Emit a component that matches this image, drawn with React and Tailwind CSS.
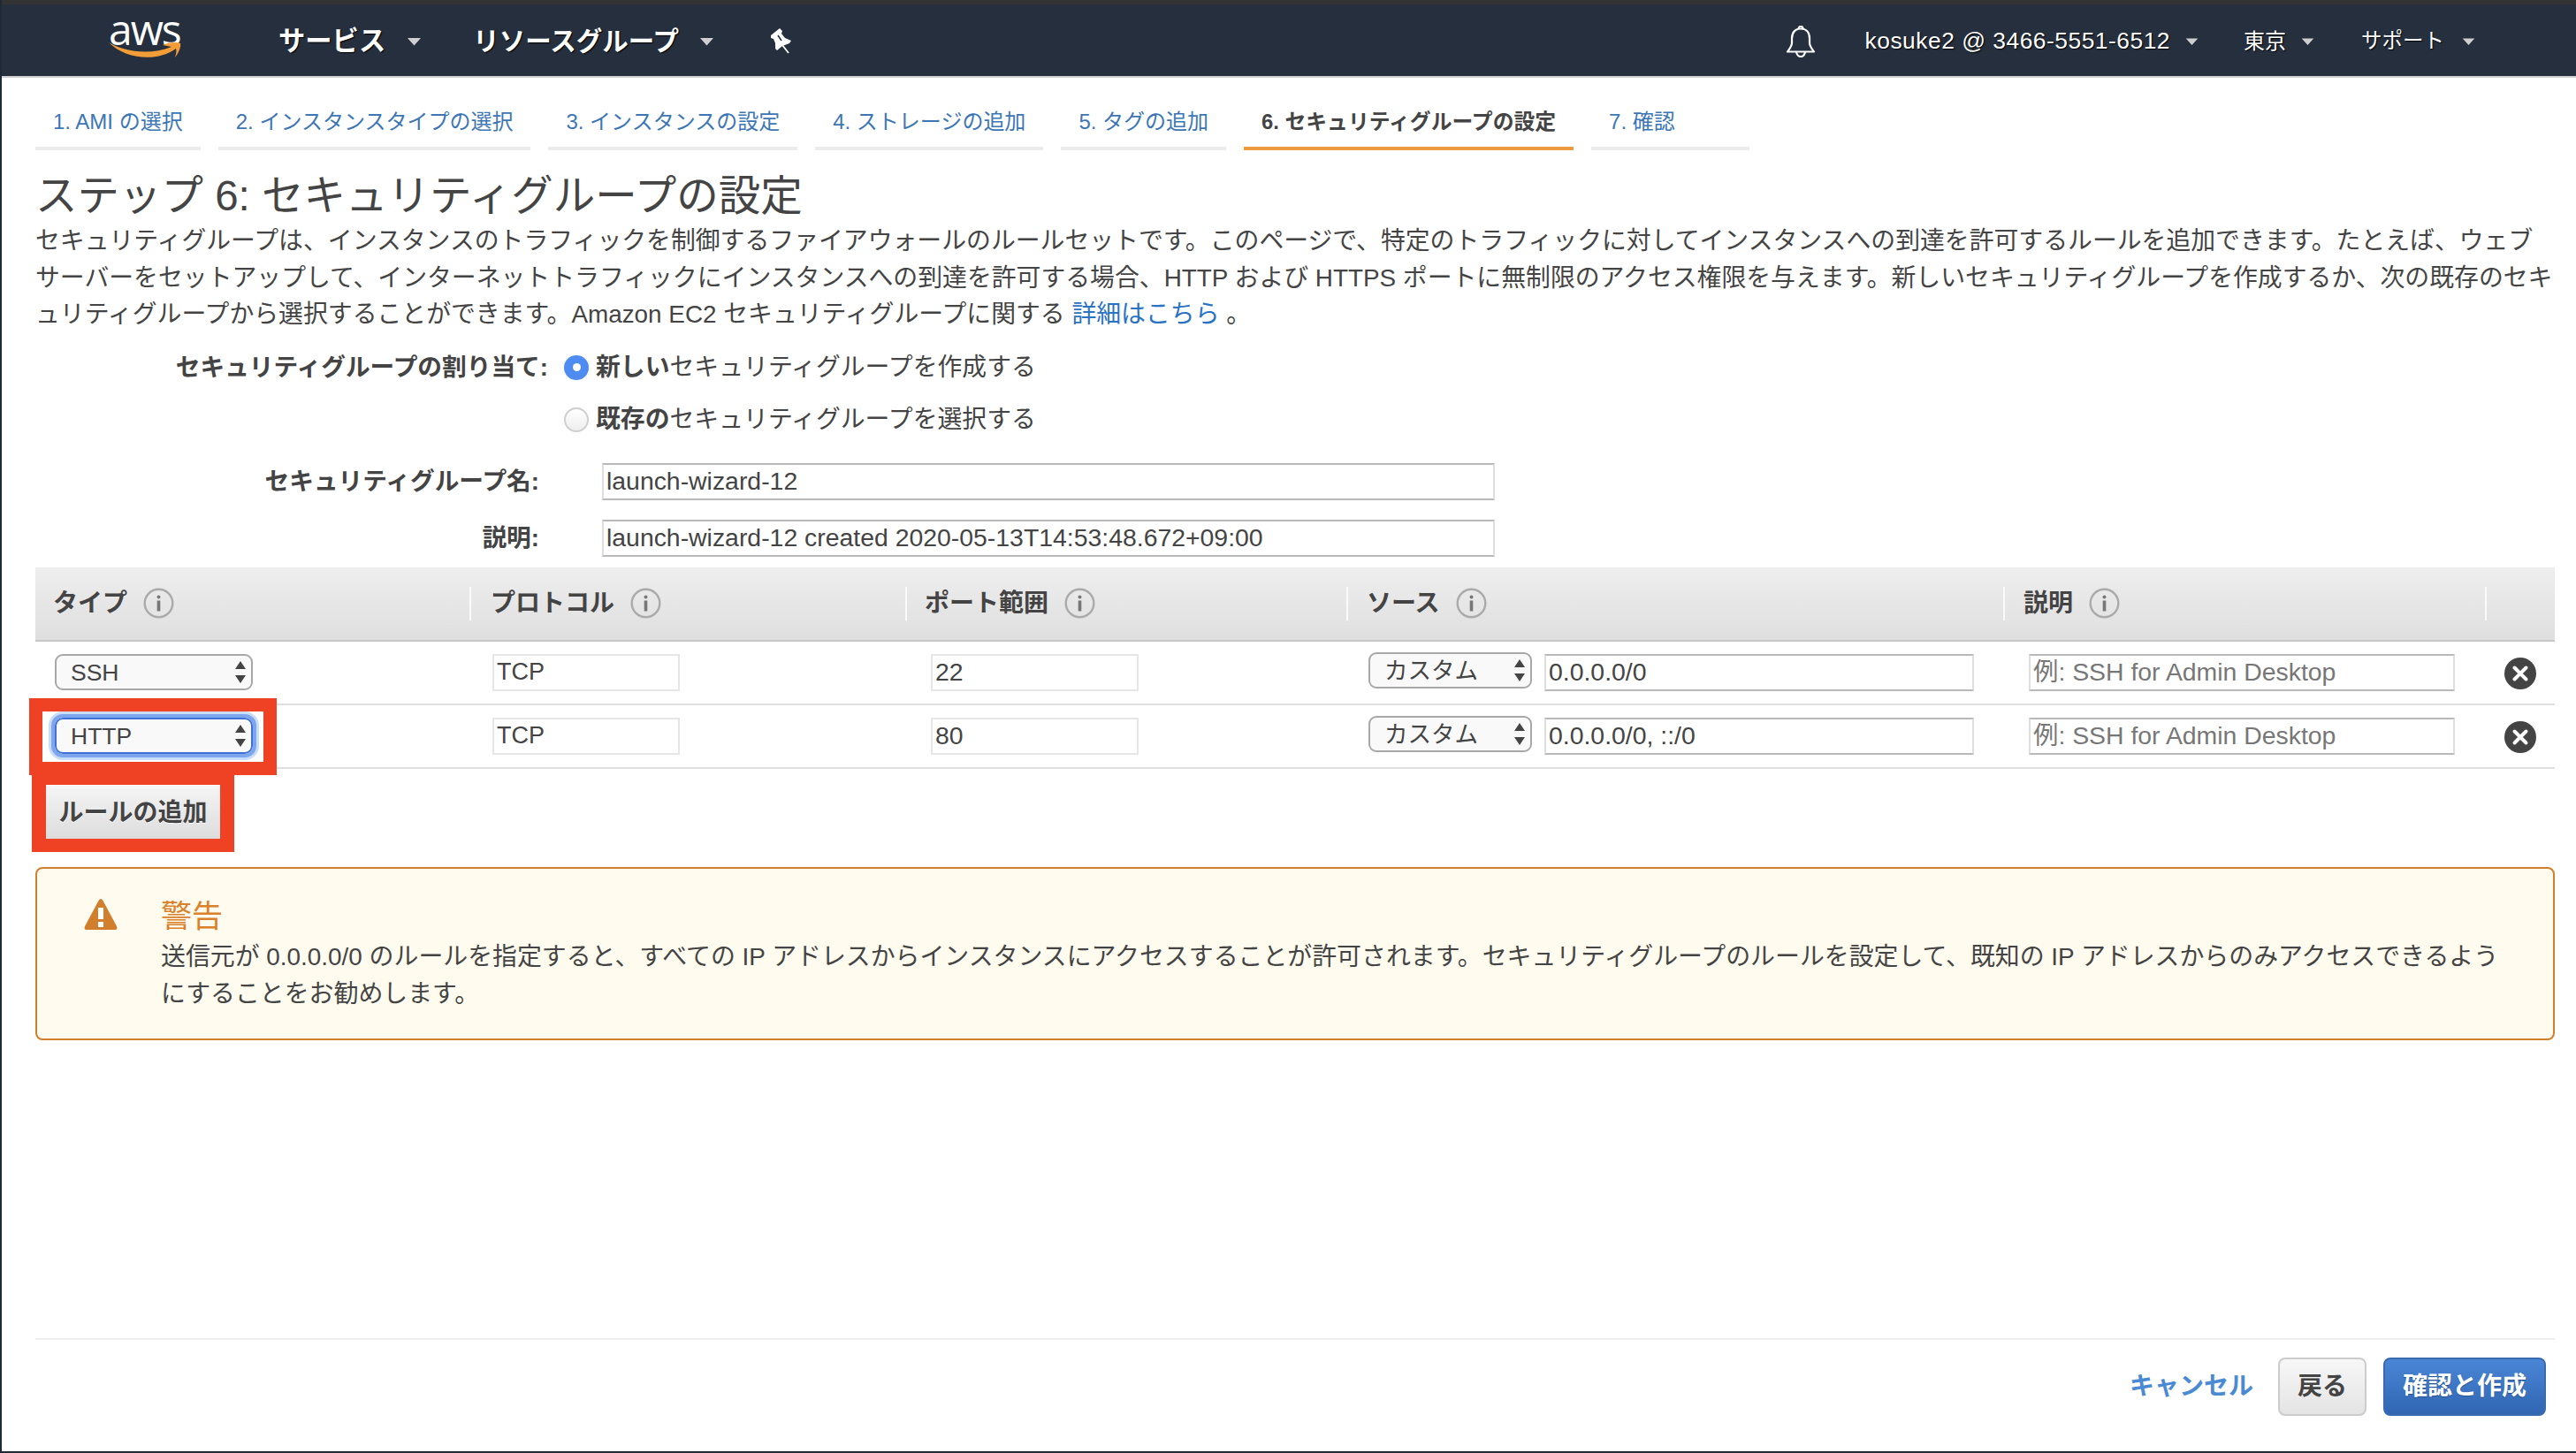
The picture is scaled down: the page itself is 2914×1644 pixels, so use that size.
import React from "react";

const Caret = ({ className = "" }) => (
  <svg width="17" height="10" viewBox="0 0 17 10" className={className}>
    <path d="M1 1h15L8.5 9.5z" fill="#cfcfcf" />
  </svg>
);

const Info = () => (
  <svg width="35" height="35" viewBox="0 0 35 35" className="shrink-0">
    <circle cx="17.5" cy="17.5" r="15.8" fill="none" stroke="#aaaaaa" strokeWidth="2.4" />
    <circle cx="17.5" cy="10.5" r="2" fill="#777" />
    <rect x="15.7" y="14.5" width="3.6" height="12" fill="#777" />
  </svg>
);

const Remove = () => (
  <svg width="36" height="36" viewBox="0 0 36 36">
    <circle cx="18" cy="18" r="18" fill="#444" />
    <path d="M11.5 11.5l13 13M24.5 11.5l-13 13" stroke="#fff" strokeWidth="4" strokeLinecap="round" />
  </svg>
);

const Arrows = ({ className = "" }) => (
  <svg width="14" height="25" viewBox="0 0 14 25" className={className}>
    <path d="M7 0l6 9H1z" fill="#444" />
    <path d="M7 25l6-9H1z" fill="#444" />
  </svg>
);

const Select = ({ value, focus, widthClass, arrowClass }) => (
  <div
    className={`relative h-[41px] ${widthClass} ${
      focus
        ? "rounded-[9px] outline-[4px] outline-[#7ea6ee] [box-shadow:0_0_0_7px_#c9dcfa]"
        : ""
    }`}
  >
    <select
      defaultValue={value}
      className={`block h-full w-full appearance-none rounded-[9px] bg-[#f9f9f9] pl-[16px] text-[26.5px] leading-[38px] text-[#444] outline-none border-2 ${
        focus ? "border-[#3f72d6]" : "border-[#a8a8a8]"
      }`}
    >
      <option>{value}</option>
    </select>
    <Arrows className={`absolute top-[8px] pointer-events-none ${arrowClass}`} />
  </div>
);

const Field = ({ value, placeholder, widthClass, light, textClass = "text-[28.4px]" }) => (
  <input
    readOnly
    value={value ?? ""}
    placeholder={placeholder}
    className={`block h-[42px] ${widthClass} bg-white pl-[3px] ${textClass} text-[#444] placeholder:text-[#777] outline-none border-2 ${
      light
        ? "border-[#e6e6e6]"
        : "border-[#dedede] border-t-[#b9b9b9] border-b-[#b9b9b9]"
    }`}
  />
);

const tabs = [
  ["1. AMI の選択", "pr-[20px]"],
  ["2. インスタンスタイプの選択", "pr-[20px]"],
  ["3. インスタンスの設定", "pr-[20px]"],
  ["4. ストレージの追加", "pr-[20px]"],
  ["5. タグの追加", "pr-[20px]"],
  ["6. セキュリティグループの設定", "pr-[20px] text-[23.8px]", true],
  ["7. 確認", "pr-[84px]"],
];

const heads = [
  ["タイプ", "w-[491px] pl-[20px]"],
  ["プロトコル", "w-[493px] pl-[22px]"],
  ["ポート範囲", "w-[499px] pl-[20px]"],
  ["ソース", "w-[743px] pl-[21px]"],
  ["説明", "w-[545px] pl-[21px]"],
];

const Row = ({ type, focus, port, source }) => (
  <div className="flex h-[72px] items-center border-b-2 border-[#dedede]">
    <div className="w-[491px] pl-[22px]">
      <Select value={type} focus={focus} widthClass="w-[224px]" arrowClass="right-[7px]" />
    </div>
    <div className="w-[493px] pl-[26px]">
      <Field value="TCP" widthClass="w-[212px]" light textClass="text-[27px]" />
    </div>
    <div className="w-[499px] pl-[29px]">
      <Field value={port} widthClass="w-[235px]" light />
    </div>
    <div className="flex w-[743px] items-center gap-[14px] pl-[25px]">
      <div className="-translate-y-[2px]">
        <Select value="カスタム" widthClass="w-[185px]" arrowClass="right-[7px]" />
      </div>
      <Field value={source} widthClass="w-[486px]" />
    </div>
    <div className="w-[545px] pl-[29px]">
      <Field placeholder="例: SSH for Admin Desktop" widthClass="w-[482px]" />
    </div>
    <div className="flex flex-1 translate-y-[1px] justify-center">
      <Remove />
    </div>
  </div>
);

export default function App() {
  return (
    <div className="relative flex h-[1644px] w-[2914px] flex-col overflow-hidden border-b-2 border-l-2 border-[#1f2a38] bg-white text-[26px] text-[#444] [font-family:'Liberation_Sans','Noto_Sans_CJK_JP',sans-serif]">
      <div className="h-[5px] shrink-0 bg-[#333]" />
      {/* top nav */}
      <header className="flex h-[83px] shrink-0 items-center border-b-2 border-[#d0d0d0] bg-[#252f3e] pt-[3px] text-white [text-shadow:1px_1px_1px_#000]">
        <div className="relative ml-[118px] h-[60px] w-[88px] -translate-y-[5px] [text-shadow:none]">
          <span className="absolute left-[3px] top-[1px] text-[48px] leading-[40px] tracking-[-2px] [font-family:'Open_Sans',sans-serif]">
            aws
          </span>
          <svg width="86" height="20" viewBox="0 0 86 20" className="absolute left-[1px] top-[35px]">
            <path d="M2 1C18 11 48 16 73 6L63 4C69 1 78 0 83 2 84 6 81 13 77 18 78 14 79 11 78 8 58 23 22 21 2 1z" fill="#f29d38" />
          </svg>
        </div>
        <span className="ml-[107px] text-[30.3px] font-bold">サービス</span>
        <Caret className="ml-[24px]" />
        <span className="ml-[58px] text-[29.5px] font-bold">リソースグループ</span>
        <Caret className="ml-[23px]" />
        <svg width="40" height="44" viewBox="0 0 40 44" className="ml-[52px]">
          <path d="M12 15L22 7l3 3-1 3 4 5 7 3-2 3-8 3-6 5-2-2v-6l-2-5-3-1z" fill="#fff" />
          <path d="M25 26l7 9" stroke="#fff" strokeWidth="1.8" />
          <path d="M20 15l4 6" stroke="#252f3e" strokeWidth="1.5" />
        </svg>
        <div className="ml-auto flex items-center">
          <svg width="34" height="36" viewBox="0 0 34 36" fill="none" stroke="#fff" strokeWidth="2.2" strokeLinejoin="round">
            <path d="M14.5 3.5a2.5 2.5 0 0 1 5 0" />
            <path d="M17 3.5c-6 0-10 4-10 11v5c0 4-3 7-5 10h30c-2-3-5-6-5-10v-5c0-7-4-11-10-11z" />
            <path d="M12 30c1 4 3 5 5 5s4-1 5-5" />
          </svg>
          <span className="ml-[56px] text-[26.4px] tracking-[0.5px]">kosuke2 @ 3466-5551-6512</span>
          <Caret className="ml-[16px] scale-90" />
          <span className="ml-[50px] text-[24px]">東京</span>
          <Caret className="ml-[16px] scale-90" />
          <span className="ml-[52px] text-[23.5px]">サポート</span>
          <Caret className="ml-[19px] mr-[113px] scale-90" />
        </div>
      </header>

      <main className="flex flex-1 flex-col pl-[38px] pr-[24px]">
        {/* wizard tabs */}
        <nav className="mt-[28px] flex gap-[20px]">
          {tabs.map(([label, pr, active]) => (
            <div
              key={label}
              className={`h-[54px] border-b-4 pl-[20px] leading-[44px] ${
                active
                  ? "border-[#ee9b3c] font-bold text-[#444]"
                  : "border-[#ececec] text-[24px] text-[#3d76b5]"
              } ${pr}`}
            >
              {label}
            </div>
          ))}
        </nav>

        <h1 className="mt-[28px] text-[47.5px] leading-[48px] text-[#444]">
          ステップ 6: セキュリティグループの設定
        </h1>
        <p className="mt-[6px] text-[27.85px] leading-[41.5px] whitespace-nowrap">
          セキュリティグループは、インスタンスのトラフィックを制御するファイアウォールのルールセットです。このページで、特定のトラフィックに対してインスタンスへの到達を許可するルールを追加できます。たとえば、ウェブ
          <br />
          サーバーをセットアップして、インターネットトラフィックにインスタンスへの到達を許可する場合、HTTP および HTTPS ポートに無制限のアクセス権限を与えます。新しいセキュリティグループを作成するか、次の既存のセキ
          <br />
          ュリティグループから選択することができます。Amazon EC2 セキュリティグループに関する <a className="text-[#2a72c3]">詳細はこちら</a> 。
        </p>

        {/* form */}
        <div className="mt-[23px] flex h-[32px] items-center">
          <label className="w-[580px] text-right text-[27.7px] font-bold">セキュリティグループの割り当て:</label>
          <span className="ml-[18px] flex h-[28px] w-[28px] items-center justify-center rounded-full bg-[#4f8cf2]">
            <span className="h-[9px] w-[9px] rounded-full bg-white" />
          </span>
          <span className="ml-[8px] text-[27.85px]"><b>新しい</b>セキュリティグループを作成する</span>
        </div>
        <div className="mt-[27px] flex h-[32px] items-center pl-[598px]">
          <span className="h-[28px] w-[28px] rounded-full border-2 border-[#cfcfcf] bg-gradient-to-b from-white to-[#eeeeee]" />
          <span className="ml-[8px] text-[27.85px]"><b>既存の</b>セキュリティグループを選択する</span>
        </div>
        <div className="mt-[33px] flex items-center">
          <label className="w-[570px] text-right text-[27.7px] font-bold">セキュリティグループ名:</label>
          <Field value="launch-wizard-12" widthClass="ml-[71px] w-[1010px]" />
        </div>
        <div className="mt-[22px] flex items-center">
          <label className="w-[570px] text-right text-[27.7px] font-bold">説明:</label>
          <Field value="launch-wizard-12 created 2020-05-13T14:53:48.672+09:00" widthClass="ml-[71px] w-[1010px]" />
        </div>

        {/* rules table */}
        <div className="mt-[12px]">
          <div className="flex h-[84px] items-center border-b-2 border-[#c8c8c8] bg-gradient-to-b from-[#eeeeee] to-[#dfdfdf]">
            {heads.map(([label, cls], i) => (
              <div
                key={label}
                className={`flex h-[38px] items-center gap-[18px] ${cls} ${
                  i > 0 ? "border-l-2 border-[#fafafa]" : ""
                }`}
              >
                <span className="text-[28px] font-bold">{label}</span>
                <Info />
              </div>
            ))}
            <div className="h-[38px] flex-1 border-l-2 border-[#fafafa]" />
          </div>
          <Row type="SSH" port="22" source="0.0.0.0/0" />
          <Row type="HTTP" focus port="80" source="0.0.0.0/0, ::/0" />
        </div>

        <button className="ml-[12px] mt-[19px] h-[61px] w-[197px] bg-gradient-to-b from-[#f5f5f5] to-[#dcdcdc] pt-[2px] text-[28px] font-bold text-[#444] [text-shadow:0_1px_0_#fff]">
          ルールの追加
        </button>

        {/* warning */}
        <section className="mt-[31px] flex h-[196px] rounded-[8px] border-[2.5px] border-[#d27f2d] bg-[#fffbee] pl-[52px] pt-[32px]">
          <svg width="40" height="37" viewBox="0 0 40 37" className="mt-[1px] shrink-0">
            <path d="M20 1c1 0 2 1 3 3l15 28c1 3 0 4-2 4H4c-2 0-3-1-2-4L17 4c1-2 2-3 3-3z" fill="#d27f2d" />
            <rect x="17" y="11" width="6" height="13" fill="#fff" />
            <rect x="17" y="27" width="6" height="6" fill="#fff" />
          </svg>
          <div className="ml-[48px]">
            <div className="text-[35px] leading-[44px] text-[#d9822b]">警告</div>
            <p className="mt-[3px] text-[27.9px] leading-[42px] whitespace-nowrap">
              送信元が 0.0.0.0/0 のルールを指定すると、すべての IP アドレスからインスタンスにアクセスすることが許可されます。セキュリティグループのルールを設定して、既知の IP アドレスからのみアクセスできるよう
              <br />
              にすることをお勧めします。
            </p>
          </div>
        </section>

        {/* footer */}
        <footer className="mt-auto flex items-center justify-end border-t-2 border-[#eeeeee] pb-[40px] pr-[10px] pt-[20px]">
          <a className="text-[28px] font-bold text-[#4a8ad4]">キャンセル</a>
          <button className="ml-[28px] h-[66px] w-[100px] rounded-[8px] border-2 border-[#cccccc] bg-gradient-to-b from-[#f7f7f7] to-[#e4e4e4] text-[28px] font-bold text-[#444]">
            戻る
          </button>
          <button className="ml-[19px] h-[66px] w-[184px] rounded-[8px] border-2 border-[#3a6bb0] bg-gradient-to-b from-[#4a86d6] to-[#3066b2] text-[28px] font-bold text-white [text-shadow:0_1px_1px_#244f8c]">
            確認と作成
          </button>
        </footer>
      </main>

      {/* red annotation boxes */}
      <div className="pointer-events-none absolute left-[31px] top-[790px] h-[87px] w-[280px] border-x-[15px] border-y-[15px] border-[#ef4123]" />
      <div className="pointer-events-none absolute left-[34px] top-[877px] h-[87px] w-[229px] border-x-[16px] border-b-[15px] border-t-[11px] border-[#ef4123]" />
    </div>
  );
}
